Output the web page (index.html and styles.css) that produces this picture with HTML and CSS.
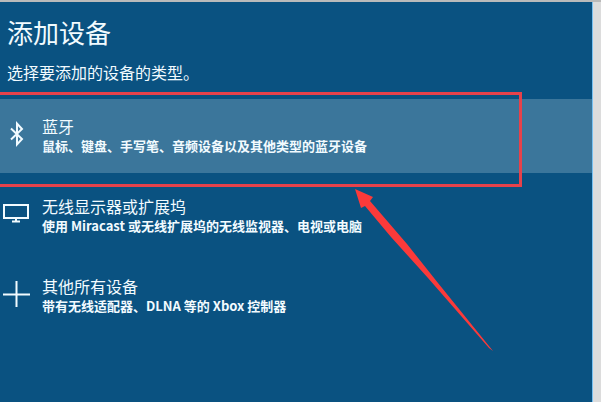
FILE: index.html
```html
<!DOCTYPE html>
<html lang="zh-CN">
<head>
    <meta charset="UTF-8">
    <meta name="viewport" content="width=device-width, initial-scale=1.0">
    <title>添加设备</title>
    <link rel="stylesheet" href="styles.css">
</head>
<body>
    <main class="dialog">
        <h1>添加设备</h1>
        <p class="intro">选择要添加的设备的类型。</p>

        <div class="device-list">
            <button type="button" class="device active">
                <svg class="icon" width="32" height="32" viewBox="0 0 32 32">
                    <path d="M11 10.5 L22 21 L17 26.5 V5.5 L22 11 L11 21.5"/>
                </svg>
                <span class="device-text">
                    <span class="device-name">蓝牙</span>
                    <span class="device-desc">鼠标、键盘、手写笔、音频设备以及其他类型的蓝牙设备</span>
                </span>
            </button>
            <button type="button" class="device">
                <svg class="icon" width="32" height="32" viewBox="0 0 32 32">
                    <path d="M4 7 H28 V20 H4 Z M16 20 V23 M12 23.5 H20"/>
                </svg>
                <span class="device-text">
                    <span class="device-name">无线显示器或扩展坞</span>
                    <span class="device-desc">使用 Miracast 或无线扩展坞的无线监视器、电视或电脑</span>
                </span>
            </button>
            <button type="button" class="device">
                <svg class="icon" width="32" height="32" viewBox="0 0 32 32">
                    <path d="M16.5 3 V29 M3 16.5 H30"/>
                </svg>
                <span class="device-text">
                    <span class="device-name">其他所有设备</span>
                    <span class="device-desc">带有无线适配器、DLNA 等的 Xbox 控制器</span>
                </span>
            </button>
        </div>

        <!-- red frame and arrow on top of the list -->
        <div class="mark-frame"></div>
        <svg class="mark-arrow" width="140" height="164" viewBox="0 0 140 164">
            <path d="M0 0 L18 8 L15 12 L52 55 L83 94 L138 162 L134 159 L73 89 L36 48 L10 17 L6 19 Z"/>
        </svg>
    </main>
</body>
</html>
```
FILE: styles.css
```css
* {
    box-sizing: border-box;
}
body {
    margin: 0;
    min-height: 100vh;
    padding-right: 8px;
    display: flex;
    background-color: #dcdcdc;
    border-top: 2px solid #bababa;
    color: #f2fbff;
    font-family: "Noto Sans CJK SC", sans-serif;
}
.dialog {
    position: relative;
    flex: 1;
    padding-top: 12px;
    background-color: #0a5281;
    border-right: 1px solid #78c0f0;
    overflow: hidden;
}
h1 {
    margin: 0 7px;
    font-size: 26px;
    line-height: 36px;
    font-weight: 400;
}
.intro {
    margin: 10px 7px 15px;
    font-size: 16px;
    line-height: 24px;
}
.device-list {
    display: flex;
    flex-direction: column;
    gap: 6px;
}
.device {
    display: flex;
    align-items: center;
    gap: 10px;
    width: 100%;
    height: 74px;
    padding: 0;
    border: none;
    background: none;
    color: inherit;
    font-family: inherit;
    text-align: left;
    cursor: pointer;
}
.device.active {
    background-color: #3b769b;
}
.icon {
    flex: none;
    margin-bottom: 4px;
    fill: none;
    stroke: #f2fbff;
    stroke-width: 2;
}
.device-name,
.device-desc {
    display: block;
    line-height: 20px;
}
.device-name {
    font-size: 16px;
}
.device-desc {
    font-size: 13px;
    font-weight: 700;
}
.mark-frame {
    position: absolute;
    top: 90px;
    left: 0;
    width: 522px;
    height: 95px;
    border: 3px solid #e6424b;
    border-left: none;
}
.mark-arrow {
    position: absolute;
    top: 187px;
    left: 355px;
    fill: #fb3a3a;
}
```
